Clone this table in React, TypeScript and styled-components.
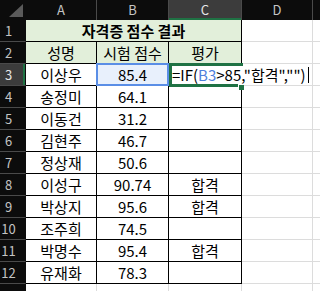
import styled, { createGlobalStyle } from "styled-components";

interface IScoreRow {
  name: string;
  score: string;
  result: string;
}

const scoreRows: IScoreRow[] = [
  { name: "이상우", score: "85.4", result: "" },
  { name: "송정미", score: "64.1", result: "" },
  { name: "이동건", score: "31.2", result: "" },
  { name: "김현주", score: "46.7", result: "" },
  { name: "정상재", score: "50.6", result: "" },
  { name: "이성구", score: "90.74", result: "합격" },
  { name: "박상지", score: "95.6", result: "합격" },
  { name: "조주희", score: "74.5", result: "" },
  { name: "박명수", score: "95.4", result: "합격" },
  { name: "유재화", score: "78.3", result: "" },
];

const columns = ["A", "B", "C", "D", ""];
const ACTIVE_COL = "C";
const ACTIVE_ROW = 3;

const App = () => {
  return (
    <Wrapper>
      <GlobalStyle />
      <Sheet>
        <colgroup>
          <col style={{ width: 26 }} />
          <col style={{ width: 71 }} />
          <col style={{ width: 72 }} />
          <col style={{ width: 73 }} />
          <col style={{ width: 71 }} />
          <col style={{ width: 40 }} />
        </colgroup>
        <thead>
          <HeadRow>
            <Corner>
              <svg width="26" height="20" viewBox="0 0 26 20">
                <polygon points="23,4 23,17 9,17" fill="#5a5a5a" />
              </svg>
            </Corner>
            {columns.map((c, i) => (
              <ColHead key={i} $active={c === ACTIVE_COL}>
                {c}
              </ColHead>
            ))}
          </HeadRow>
        </thead>
        <tbody>
          <Row>
            <RowHead $active={false}>1</RowHead>
            <Cell colSpan={3} $fill="#e2efda" $boxed $bold>
              자격증 점수 결과
            </Cell>
            <Cell />
            <Cell />
          </Row>
          <Row>
            <RowHead $active={false}>2</RowHead>
            <Cell $fill="#e2efda" $boxed>
              성명
            </Cell>
            <Cell $fill="#e2efda" $boxed>
              시험 점수
            </Cell>
            <Cell $fill="#e2efda" $boxed>
              평가
            </Cell>
            <Cell />
            <Cell />
          </Row>
          {scoreRows.map((row, index) => {
            const rowNo = index + 3;
            const isActive = rowNo === ACTIVE_ROW;
            return (
              <Row key={rowNo}>
                <RowHead $active={isActive}>{rowNo}</RowHead>
                <Cell $boxed>{row.name}</Cell>
                <Cell $boxed $fill={isActive ? "#e8f0fc" : undefined}>
                  {isActive && <RefFrame />}
                  {row.score}
                </Cell>
                <Cell $boxed>
                  {isActive ? (
                    <>
                      <SelectFrame />
                      <FillHandle />
                      <Editor>
                        =IF(<RefText>B3</RefText>&gt;85,"합격","")
                        <Caret />
                      </Editor>
                    </>
                  ) : (
                    row.result
                  )}
                </Cell>
                <Cell />
                <Cell />
              </Row>
            );
          })}
          {/* row 13 is only a sliver at the bottom edge, its number is not visible */}
          <Row>
            <RowHead $active={false} />
            <Cell />
            <Cell />
            <Cell />
            <Cell />
            <Cell />
          </Row>
        </tbody>
      </Sheet>
    </Wrapper>
  );
};

const GlobalStyle = createGlobalStyle`
  html, body {
    margin: 0;
    padding: 0;
    background: #ffffff;
    overflow: hidden;
  }
  body {
    font-family: "Noto Sans CJK KR", "Noto Sans", sans-serif;
  }
`;

const Wrapper = styled.div`
  width: 320px;
  height: 291px;
  overflow: hidden;
  background: #ffffff;
`;

const Sheet = styled.table`
  border-collapse: separate;
  border-spacing: 0;
  table-layout: fixed;
  width: 353px;
`;

const HeadRow = styled.tr`
  height: 20px;
`;

const Corner = styled.th`
  padding: 0;
  height: 20px;
  background: #0c0c0c;
  border-right: 1px solid #0c0c0c;
  box-sizing: border-box;
  line-height: 0;
  vertical-align: top;
  text-align: left;
  & svg {
    display: block;
  }
`;

const ColHead = styled.th<{ $active: boolean }>`
  padding: 0;
  height: 20px;
  box-sizing: border-box;
  background: ${(p) => (p.$active ? "#3c3c3c" : "#0c0c0c")};
  color: ${(p) => (p.$active ? "#e6e6e6" : "#c4c4c4")};
  border-right: 1px solid #4a4a4a;
  box-shadow: ${(p) => (p.$active ? "inset 0 -2px #1f7244" : "none")};
  font-size: 13px;
  font-weight: 400;
  line-height: 20px;
  text-align: center;
`;

const Row = styled.tr`
  height: 22px;
`;

const RowHead = styled.th<{ $active: boolean }>`
  padding: 0 8px 0 0;
  box-sizing: border-box;
  background: ${(p) => (p.$active ? "#3c3c3c" : "#0c0c0c")};
  color: ${(p) => (p.$active ? "#e6e6e6" : "#c4c4c4")};
  border-right: 1px solid #0c0c0c;
  border-bottom: 1px solid #4a4a4a;
  box-shadow: ${(p) => (p.$active ? "inset -2px 0 #1f7244" : "none")};
  font-size: 13px;
  font-weight: 400;
  line-height: 21px;
  text-align: center;
`;

const Cell = styled.td<{ $fill?: string; $boxed?: boolean; $bold?: boolean }>`
  position: relative;
  padding: 0;
  background: ${(p) => p.$fill || "#ffffff"};
  border-right: 1px solid ${(p) => (p.$boxed ? "#000000" : "#dcdcdc")};
  border-bottom: 1px solid ${(p) => (p.$boxed ? "#000000" : "#dcdcdc")};
  color: #000000;
  font-size: 15px;
  font-weight: ${(p) => (p.$bold ? 700 : 400)};
  line-height: 21px;
  text-align: center;
  white-space: nowrap;
  overflow: visible;
`;

const RefFrame = styled.div`
  position: absolute;
  top: -1px;
  left: -1px;
  right: -1px;
  bottom: -1px;
  border: 2px solid #5a8ee6;
  pointer-events: none;
`;

const SelectFrame = styled.div`
  position: absolute;
  top: -1px;
  left: 0;
  right: -2px;
  bottom: -2px;
  border: 3px solid #1f7244;
  z-index: 1;
`;

const FillHandle = styled.div`
  position: absolute;
  right: -3px;
  bottom: -5px;
  width: 5px;
  height: 5px;
  background: #1f7244;
  border-left: 1px solid #ffffff;
  border-top: 1px solid #ffffff;
  z-index: 2;
`;

const Editor = styled.div`
  position: absolute;
  top: 2px;
  left: 3px;
  height: 18px;
  padding-right: 3px;
  background: #ffffff;
  display: flex;
  align-items: center;
  font-size: 15px;
  line-height: 18px;
  color: #000000;
  z-index: 2;
`;

const RefText = styled.span`
  color: #4f7fdc;
`;

const Caret = styled.span`
  display: inline-block;
  width: 1px;
  height: 16px;
  margin-left: 2px;
  background: #000000;
`;

export default App;
